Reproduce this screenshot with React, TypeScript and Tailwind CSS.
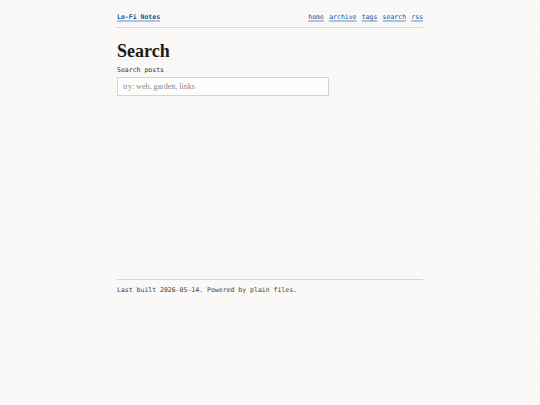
const links = ["home", "archive", "tags", "search", "rss"];

const mono = "font-['DejaVu_Sans_Mono','Liberation_Mono',monospace]";
const linkCls =
  "text-[#1f4f8f] underline decoration-[#a9c3e8] decoration-2 underline-offset-[1px]";

export default function App() {
  return (
    <div className="min-h-screen bg-[#faf9f7] bg-[repeating-linear-gradient(to_bottom,transparent_0,transparent_11px,#f5f4f1_11px,#f5f4f1_12px)]">
      <div className={`mx-auto w-[306px] pt-[12px] ${mono} text-[6.5px] leading-[10px]`}>
        <header className="flex items-baseline justify-between border-b border-[#d8d7d3] pb-[5px]">
          <a href="#" className={`font-bold ${linkCls}`}>
            Lo-Fi Notes
          </a>
          <nav className="flex gap-[5.2px]">
            {links.map((l) => (
              <a key={l} href="#" className={linkCls}>
                {l}
              </a>
            ))}
          </nav>
        </header>

        <main className="h-[239px]">
          <h1 className="mt-[12px] font-['Liberation_Serif',serif] text-[18px] font-bold leading-[22px] text-[#1a1a1a]">
            Search
          </h1>
          <label htmlFor="q" className="mt-[3px] block text-[#333]">
            Search posts
          </label>
          <input
            id="q"
            type="text"
            placeholder="try: web, garden, links"
            className="mt-[2px] block h-[19px] w-[212px] border border-[#d6d5d1] bg-[#fdfdfc] px-[5px] font-['Liberation_Serif',serif] text-[8px] text-[#333] outline-none placeholder:text-[#8a8a8a]"
          />
        </main>

        <footer className="border-t border-[#d8d7d3] pt-[5px] text-[#444]">
          Last built 2026-05-14. Powered by plain files.
        </footer>
      </div>
    </div>
  );
}
